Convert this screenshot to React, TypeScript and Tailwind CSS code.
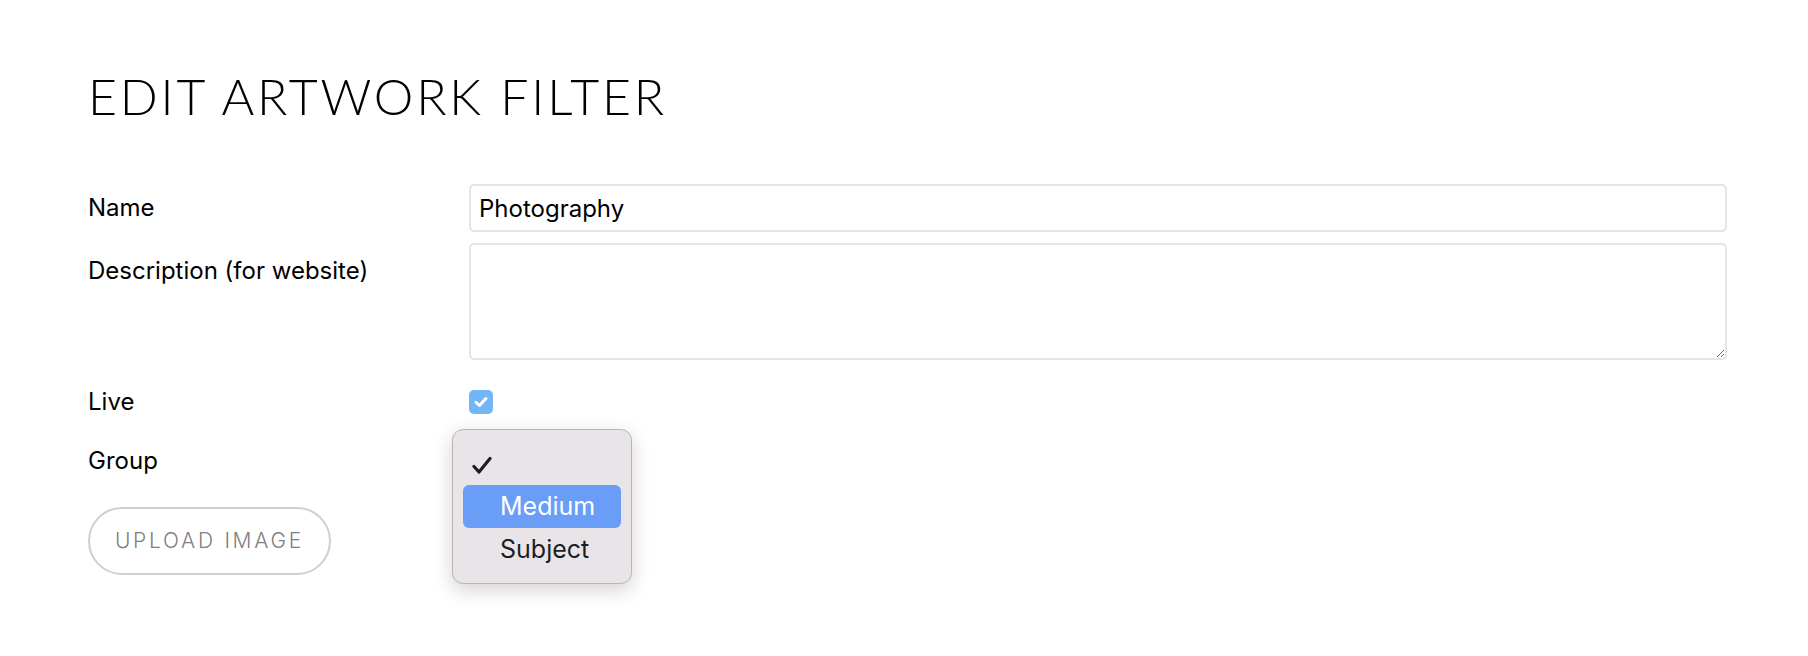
import { useState } from "react";

const labelCls = "text-[24px] text-black";

const App = () => {
  const [name, setName] = useState("Photography");
  const [description, setDescription] = useState("");
  const [live, setLive] = useState(true);

  return (
    <div
      className="w-full min-h-[656px] bg-white pl-[88px] pr-[81px] pt-[66px]"
      style={{ fontFamily: "Inter, 'Noto Sans', sans-serif" }}
    >
      <h1
        className="text-[50px] leading-[60px] font-light tracking-[0.056em] text-black"
        style={{ fontFamily: "Lato, 'Noto Sans', sans-serif" }}
      >
        EDIT ARTWORK FILTER
      </h1>

      <div className="mt-[58px] grid grid-cols-[381px_1fr] gap-y-[11px]">
        <label htmlFor="name" className={`${labelCls} self-center`}>
          Name
        </label>
        <input
          id="name"
          value={name}
          onChange={(e) => setName(e.target.value)}
          className="h-[48px] w-full rounded-[5px] border-2 border-[#e4e4e4] px-[8px] text-[24px] text-black outline-none"
        />

        <label htmlFor="description" className={`${labelCls} pt-[10px]`}>
          Description (for website)
        </label>
        <textarea
          id="description"
          value={description}
          onChange={(e) => setDescription(e.target.value)}
          className="h-[117px] w-full rounded-[5px] border-2 border-[#e4e4e4] px-[8px] text-[24px] outline-none"
        />

        <div className={`${labelCls} mt-[13px] self-center`}>Live</div>
        <div className="mt-[13px] flex items-center">
          <button
            onClick={() => setLive(!live)}
            className={`flex h-[24px] w-[24px] items-center justify-center rounded-[5px] ${
              live ? "bg-[#74b5f7]" : "border-2 border-[#ccc] bg-white"
            }`}
          >
            {live && (
              <svg width="16" height="16" viewBox="0 0 16 16" fill="none">
                <path
                  d="M3 8.3 L6.5 11.5 L13 4.5"
                  stroke="white"
                  strokeWidth="3"
                  strokeLinecap="round"
                  strokeLinejoin="round"
                />
              </svg>
            )}
          </button>
        </div>

        <div className={`${labelCls} mt-[12px]`}>Group</div>
        <div className="relative mt-[12px] h-[30px]">
          {/* open native select menu */}
          <div
            className="absolute left-[-17px] top-[-14px] w-[180px] rounded-[11px] border border-[#b9b6ba] bg-[#e8e4e8] px-[10px] pb-[11px] pt-[15px] shadow-[0_6px_20px_rgba(0,0,0,0.18)]"
          >
            <div className="flex h-[40px] items-center pl-[9px]">
              <svg width="20" height="19" viewBox="0 0 20 19" fill="none">
                <path
                  d="M2 10.5 L7 16 L18 2.5"
                  stroke="#1d1d1f"
                  strokeWidth="3.2"
                  strokeLinecap="round"
                  strokeLinejoin="round"
                />
              </svg>
            </div>
            <div className="flex h-[43px] items-center rounded-[6px] bg-[#699df7] pl-[37px] text-[25px] text-white">
              Medium
            </div>
            <div className="flex h-[44px] items-center pl-[37px] text-[25px] text-[#1d1d1f]">
              Subject
            </div>
          </div>
        </div>
      </div>

      <button className="mt-[28px] h-[68px] w-[243px] rounded-full border-2 border-[#cfcfcf] bg-white text-[21px] font-light tracking-[0.13em] text-[#808080]">
        UPLOAD IMAGE
      </button>
    </div>
  );
};

export default App;
